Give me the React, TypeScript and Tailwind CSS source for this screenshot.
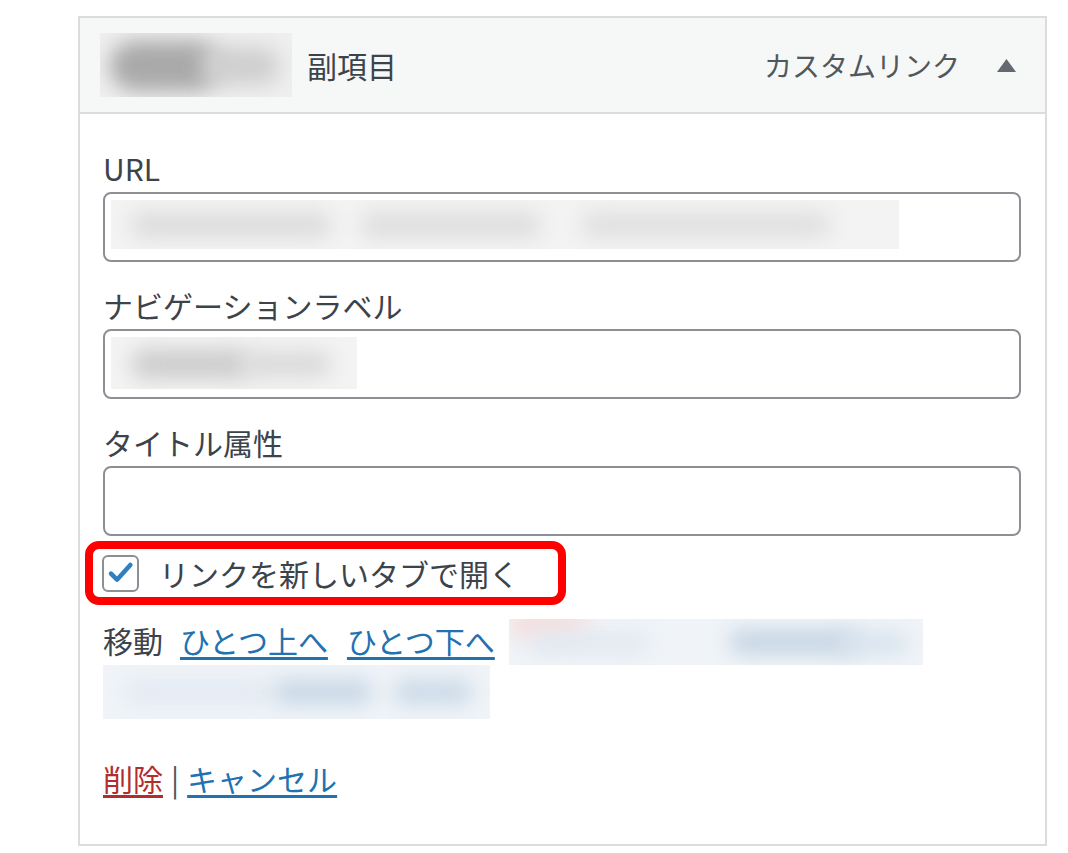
import React from 'react';

const font = { fontFamily: '"Noto Sans CJK JP", "Noto Sans", sans-serif' };

const Blur: React.FC<{ className: string; blobs: { l: number; t: number; w: number; h: number; c: string }[] }> = ({ className, blobs }) => (
  <div className={`relative overflow-hidden ${className}`}>
    {blobs.map((b, i) => (
      <div
        key={i}
        className="absolute rounded-full blur-[10px]"
        style={{ left: b.l, top: b.t, width: b.w, height: b.h, background: b.c }}
      />
    ))}
  </div>
);

const Field: React.FC<{ label: string; children?: React.ReactNode; first?: boolean }> = ({ label, children, first }) => (
  <div className={first ? '' : 'mt-[23px]'}>
    <div className="h-[40px] leading-[40px] text-[30px] text-[#3c434a]">{label}</div>
    <div className="mt-[4px] h-[70px] rounded-[8px] border-2 border-[#8c8f94] bg-white p-[6px]">{children}</div>
  </div>
);

const App: React.FC = () => {
  return (
    <div className="min-h-[853px] w-[1068px] bg-white pl-[78px] pt-[16px]" style={font}>
      <div className="w-[969px] border-2 border-[#dcdcde] bg-white">
        {/* header */}
        <div className="flex h-[96px] items-center border-b-2 border-[#dcdcde] bg-[#f6f7f7] pl-[20px] pr-[29px]">
          <Blur
            className="h-[64px] w-[192px] bg-[#efefef]"
            blobs={[
              { l: 10, t: 8, w: 110, h: 50, c: '#a9a9a9' },
              { l: 100, t: 14, w: 80, h: 38, c: '#cfcfcf' },
            ]}
          />
          <span className="ml-[15px] text-[30px] leading-none text-[#3c434a]">副項目</span>
          <span className="ml-auto text-[28px] leading-none text-[#50575e]">カスタムリンク</span>
          <svg className="ml-[37px]" width="19" height="13" viewBox="0 0 19 13">
            <polygon points="9.5,0 19,13 0,13" fill="#646970" />
          </svg>
        </div>

        {/* body */}
        <div className="pb-[46px] pl-[23px] pr-[24px] pt-[34px]">
          <Field label="URL" first>
            <Blur
              className="h-[49px] w-[788px] bg-[#f3f3f3]"
              blobs={[
                { l: 20, t: 12, w: 200, h: 26, c: '#dcdcdc' },
                { l: 250, t: 12, w: 180, h: 26, c: '#dedede' },
                { l: 470, t: 12, w: 250, h: 26, c: '#e0e0e0' },
              ]}
            />
          </Field>
          <Field label="ナビゲーションラベル">
            <Blur
              className="h-[52px] w-[246px] bg-[#f3f3f3]"
              blobs={[
                { l: 20, t: 12, w: 120, h: 30, c: '#cdcdcd' },
                { l: 130, t: 14, w: 90, h: 26, c: '#dadada' },
              ]}
            />
          </Field>
          <Field label="タイトル属性" />

          {/* checkbox, highlighted */}
          <div className="-ml-[18px] mt-[5px] flex h-[64px] w-fit items-center rounded-[14px] border-[8px] border-[#ff0000] pl-[9px] pr-[39px]">
            <div className="flex h-[37px] w-[37px] items-center justify-center rounded-[6px] border-2 border-[#8c8f94] bg-white">
              <svg width="32" height="32" viewBox="0 0 24 24">
                <path d="M4.5 12.5l4.5 4.5 10-11" fill="none" stroke="#2f7fc1" strokeWidth="3.4" strokeLinecap="round" strokeLinejoin="round" />
              </svg>
            </div>
            <span className="ml-[20px] text-[30px] leading-none text-[#3c434a]">リンクを新しいタブで開く</span>
          </div>

          {/* move */}
          <div className="mt-[14px] flex flex-wrap items-center">
            <span className="h-[44px] text-[30px] leading-[40px] text-[#3c434a]">移動</span>
            <a className="ml-[17px] h-[44px] text-[30px] leading-[40px] text-[#2271b1] underline underline-offset-[4px]">ひとつ上へ</a>
            <a className="ml-[19px] h-[44px] text-[30px] leading-[40px] text-[#2271b1] underline underline-offset-[4px]">ひとつ下へ</a>
            <Blur
              className="ml-[14px] h-[46px] w-[414px] bg-[#f0f4f8]"
              blobs={[
                { l: 0, t: -10, w: 80, h: 30, c: '#f6dede' },
                { l: 20, t: 12, w: 120, h: 24, c: '#e1e9f1' },
                { l: 220, t: 10, w: 130, h: 26, c: '#c7d6e4' },
                { l: 330, t: 12, w: 70, h: 24, c: '#d8e3ee' },
              ]}
            />
            <Blur
              className="h-[54px] w-[387px] bg-[#f0f4f8]"
              blobs={[
                { l: 20, t: 14, w: 150, h: 26, c: '#e3eaf2' },
                { l: 170, t: 14, w: 100, h: 26, c: '#c9d8e6' },
                { l: 290, t: 14, w: 80, h: 26, c: '#ccdae7' },
              ]}
            />
          </div>

          {/* actions */}
          <div className="mt-[39px] flex h-[40px] items-center text-[30px] leading-[40px]">
            <a className="text-[#b32d2e] underline underline-offset-[4px]">削除</a>
            <span className="mx-[8px] text-[#50575e]">|</span>
            <a className="text-[#2271b1] underline underline-offset-[4px]">キャンセル</a>
          </div>
        </div>
      </div>
    </div>
  );
};

export default App;
